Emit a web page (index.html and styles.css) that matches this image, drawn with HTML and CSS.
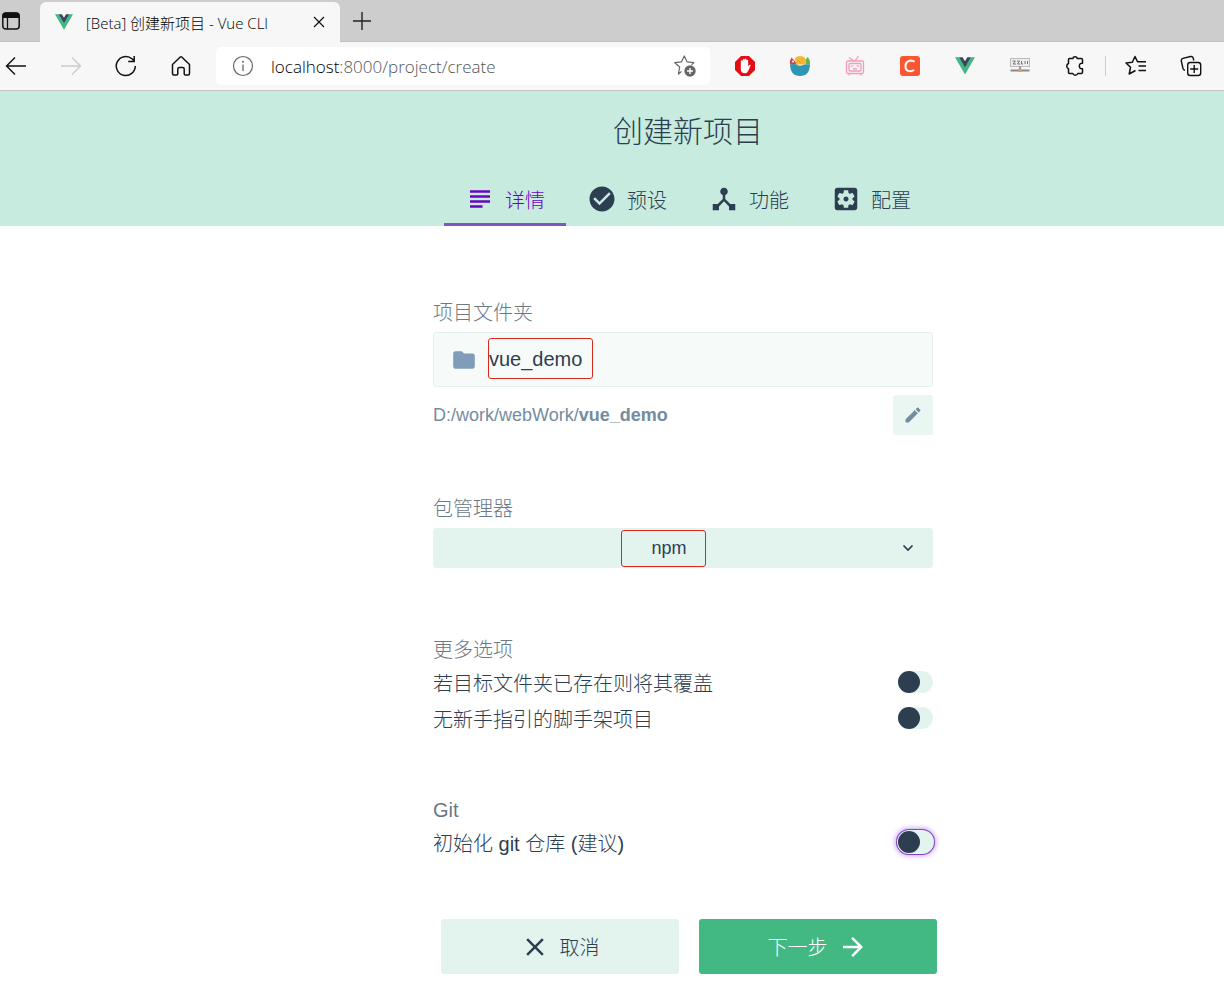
FILE: index.html
```html
<!DOCTYPE html>
<html lang="zh-CN">
<head>
<meta charset="utf-8">
<title>[Beta] 创建新项目 - Vue CLI</title>
<link rel="stylesheet" href="styles.css">
</head>
<body>
<div class="browser">
  <div class="tab-strip">
    <button class="icon-button tab-actions" aria-label="标签页操作">
      <svg width="20" height="20" viewBox="0 0 20 20"><rect x="1.8" y="2" width="16.4" height="16" rx="3" fill="none" stroke="#111" stroke-width="1.5"/><path d="M1.5 7V5a3.5 3.5 0 0 1 3.500-3.500h10A3.500 3.500 0 0 1 18.500 5v2z" fill="#111"/><path d="M6.500 7v11" stroke="#111" stroke-width="1.300"/></svg>
    </button>
    <div class="browser-tab">
      <svg width="18" height="16" viewBox="0 0 256 221"><path fill="#41b883" d="M0 0l128 220.800L256 0h-51.200L128 132.480 50.560 0z"/><path fill="#35495e" d="M50.560 0L128 133.120 204.800 0h-47.360L128 51.200 97.280 0z"/></svg>
      <span class="browser-tab-title">[Beta] 创建新项目 - Vue CLI</span>
      <button class="icon-button" aria-label="关闭标签页"><svg width="12" height="12" viewBox="0 0 12 12"><path d="M1 1l10 10M11 1L1 11" stroke="#111" stroke-width="1.200"/></svg></button>
    </div>
    <button class="icon-button new-tab" aria-label="新建标签页"><svg width="18" height="18" viewBox="0 0 18 18"><path d="M9 0v18M0 9h18" stroke="#222" stroke-width="1.400"/></svg></button>
  </div>
  <div class="toolbar">
    <div class="tool-group">
      <button class="icon-button" aria-label="后退"><svg width="22" height="22" viewBox="0 0 22 22" fill="none" stroke="#111" stroke-width="1.400"><path d="M21 11H1.500M10 2.500L1.500 11l8.500 8.500"/></svg></button>
      <button class="icon-button" aria-label="前进"><svg width="22" height="22" viewBox="0 0 22 22" fill="none" stroke="#ccc" stroke-width="1.400"><path d="M1 11h19.500M12 2.500l8.500 8.500-8.500 8.500"/></svg></button>
      <button class="icon-button" aria-label="刷新"><svg width="22" height="22" viewBox="0 0 22 22" fill="none" stroke="#111" stroke-width="1.500"><path d="M20.300 11A9.500 9.500 0 1 1 17 3.800l2 2M19.200 1v5.500h-6"/></svg></button>
      <button class="icon-button" aria-label="主页"><svg width="22" height="22" viewBox="0 0 22 22" fill="none" stroke="#111" stroke-width="1.500" stroke-linejoin="round"><path d="M2.500 9.500L10 2.200q1-.9 2 0l7.500 7.300v9q0 1.500-1.500 1.500h-2.500q-1.300 0-1.300-1.300V14q0-1.500-1.500-1.500h-3.400Q7.800 12.500 7.800 14v4.700Q7.800 20 6.500 20H4q-1.500 0-1.500-1.500z"/></svg></button>
    </div>
    <div class="address-bar">
      <svg width="22" height="22" viewBox="0 0 22 22"><circle cx="11" cy="11" r="9.500" fill="none" stroke="#666" stroke-width="1.200"/><path d="M11 9.500v6.500" stroke="#666" stroke-width="1.300"/><circle cx="11" cy="6.700" r="1" fill="#666"/></svg>
      <span class="url"><span class="host">localhost</span>:8000/project/create</span>
      <button class="icon-button" aria-label="添加到收藏夹"><svg width="22" height="22" viewBox="0 0 22 22"><path d="M7.500 16.500L4.400 19l1.300-7L.8 7.700l6.600-.8L10.300 1l2.900 5.900 6.600.8-2.300 2" fill="none" stroke="#666" stroke-width="1.200" stroke-linejoin="round"/><circle cx="16" cy="16" r="5.700" fill="#666"/><path d="M16 13v6M13 16h6" stroke="#fff" stroke-width="1.400"/></svg></button>
    </div>
    <div class="tool-group">
      <button class="icon-button" aria-label="广告拦截"><svg width="22" height="22" viewBox="0 0 22 22"><path d="M7 1h8l6 6v8l-6 6H7l-6-6V7z" fill="#e40d13"/><path d="M6.800 6.200q0-.9.900-.9t.9.900V5q0-1 1-1t1 1v-.5q0-.9.900-.9t.9.900v1q.1-.8.900-.8t.9.900v6l1-1.500q.7-.8 1.600-.2l-2.300 5.300Q13.200 18.300 11 18.300q-4.200 0-4.200-4.300z" fill="#fff"/></svg></button>
      <button class="icon-button" aria-label="扩展"><svg width="22" height="22" viewBox="0 0 22 22"><path d="M1 9.500Q.5 5 2.500 2.500L9 9.500z" fill="#c84852"/><path d="M14 9l4.500-7Q21.500 5 21 9.500z" fill="#64b447"/><path d="M7 9.500L6 3q3-3 8-1.500 4 2 3 8z" fill="#f6b832"/><path d="M1 9.500q4.500-1 7 .5 3 1.500 6 0 3-1.300 7-.5Q20.500 21 11 21T1 9.500z" fill="#2f95b5"/><circle cx="4" cy="6.500" r="1" fill="#fff"/><path d="M9 5l3 3M12 3.500l2 2" stroke="#e99b18"/></svg></button>
      <button class="icon-button" aria-label="哔哩哔哩助手"><svg width="22" height="22" viewBox="0 0 22 22" fill="none" stroke="#f39bb9" stroke-width="1.300"><rect x="2.500" y="6" width="17" height="12.500" rx="1.500"/><rect x="5" y="8.500" width="12" height="7.500" rx="1"/><path d="M5 2.500L10 6M14.500 1L11 6M6.500 11.500l3-1M15.500 11.500l-3-1M9 13.500q1 1 2 0 1 1 2 0M5 19v1.500M17 19v1.500"/></svg></button>
      <button class="icon-button" aria-label="C 扩展"><svg width="22" height="22" viewBox="0 0 22 22"><rect x="1" y="1" width="20" height="20" rx="3" fill="#fc5531"/><path d="M15.500 6.800Q14 5.500 11.800 5.500 6.500 6 6.500 11.500q0 4.700 4.600 4.700 2.300 0 4-1.200" fill="none" stroke="#fff" stroke-width="2"/></svg></button>
      <button class="icon-button" aria-label="Vue Devtools"><svg width="20" height="18" viewBox="0 0 256 221"><path fill="#41b883" d="M0 0l128 220.800L256 0h-51.200L128 132.480 50.560 0z"/><path fill="#35495e" d="M50.560 0L128 133.120 204.800 0h-47.360L128 51.200 97.280 0z"/></svg></button>
      <button class="icon-button" aria-label="IP 扩展"><svg width="22" height="22" viewBox="0 0 22 22"><rect x="1.500" y="3.500" width="19" height="8" fill="#eee" stroke="#bbb"/><path d="M3.500 6h3l-2.500 3h3M8 6h2.500l-2 3H11M12.500 6v3h1.500M16 6v3M18.500 6v3" stroke="#777" fill="none"/><path d="M11 11.500V15" stroke="#777" stroke-width="1.500"/><path d="M1.500 15.500h19" stroke="#888" stroke-width="2"/><rect x="9" y="13.500" width="4" height="3.500" rx="1" fill="#d59a83"/></svg></button>
      <button class="icon-button" aria-label="扩展管理"><svg width="22" height="22" viewBox="0 0 22 22" fill="none" stroke="#111" stroke-width="1.500" stroke-linejoin="round"><path d="M4.500 4.500q0-1 1-1h3.300a2.300 2.300 0 0 1 4.500 0h4q1.200 0 1.200 1.200v3.500q-3-.3-3.200 2.800.2 3 3.200 2.800v3.500q0 1.200-1.200 1.200h-3.500a2.700 2.700 0 0 1-5 0H5.500q-1 0-1-1v-3.800a2.800 2.800 0 0 1 0-5.200z"/></svg></button>
    </div>
    <div class="tool-divider"></div>
    <div class="tool-group">
      <button class="icon-button" aria-label="收藏夹"><svg width="22" height="22" viewBox="0 0 22 22" fill="none" stroke="#111" stroke-width="1.500" stroke-linejoin="round"><path d="M10.500 15.500L4.200 19l1.300-6.700L1 8l6.300-.8L10 1.500l2.500 5.200H21M13.500 11h7.500M13.500 15.500h7.500"/></svg></button>
      <button class="icon-button" aria-label="集锦"><svg width="22" height="22" viewBox="0 0 22 22" fill="none" stroke="#111" stroke-width="1.400"><path d="M5 15.300q-1.500-.3-2-1.800L1.300 6q-.3-2 1.500-2.600L10.500 1.500q2-.4 2.700 1.500l.6 2.500"/><rect x="7.700" y="7.500" width="13" height="13" rx="2.500"/><path d="M14.200 10v8M10.200 14h8"/></svg></button>
    </div>
  </div>
</div>

<header class="page-header">
  <h1>创建新项目</h1>
  <nav class="steps">
    <a class="step active" href="#details"><svg class="icon" viewBox="0 0 24 24"><path d="M14 17H4v2h10v-2zm6-8H4v2h16V9zM4 15h16v-2H4v2zM4 5v2h16V5H4z"/></svg>详情</a>
    <a class="step" href="#presets"><svg class="icon" viewBox="0 0 24 24"><path d="M12 2C6.480 2 2 6.480 2 12s4.480 10 10 10 10-4.480 10-10S17.520 2 12 2zm-2 15l-5-5 1.410-1.410L10 14.170l7.590-7.590L19 8l-9 9z"/></svg>预设</a>
    <a class="step" href="#features"><svg class="icon" viewBox="0 0 24 24"><path d="M17 16l-4-4V8.820C14.160 8.400 15 7.300 15 6c0-1.660-1.340-3-3-3S9 4.340 9 6c0 1.300.84 2.400 2 2.820V12l-4 4H3v5h5v-3.050l4-4.200 4 4.200V21h5v-5h-4z"/></svg>功能</a>
    <a class="step" href="#config"><svg class="icon" viewBox="0 0 24 24"><path d="M12 10c-1.100 0-2 .9-2 2s.9 2 2 2 2-.9 2-2-.9-2-2-2zm7-7H5c-1.110 0-2 .9-2 2v14c0 1.100.89 2 2 2h14c1.110 0 2-.9 2-2V5c0-1.100-.89-2-2-2zm-1.750 9c0 .23-.02.46-.05.68l1.480 1.160c.13.11.17.3.08.45l-1.400 2.420c-.09.15-.27.21-.43.15l-1.740-.7c-.36.28-.76.51-1.180.69l-.26 1.850c-.03.17-.18.3-.35.3h-2.800c-.17 0-.32-.13-.35-.29l-.26-1.850c-.43-.18-.82-.41-1.180-.69l-1.740.7c-.16.06-.34 0-.43-.15l-1.400-2.420c-.09-.15-.05-.34.08-.45l1.480-1.160c-.03-.23-.05-.46-.05-.69 0-.23.02-.46.05-.68l-1.480-1.160c-.13-.11-.17-.3-.08-.45l1.400-2.420c.09-.15.27-.21.43-.15l1.740.7c.36-.28.76-.51 1.180-.69l.26-1.850c.03-.17.18-.3.35-.3h2.800c.17 0 .32.13.35.29l.26 1.850c.43.18.82.41 1.180.69l1.740-.7c.16-.06.34 0 .43.15l1.400 2.420c.09.15.05.34-.08.45l-1.480 1.160c.03.23.05.46.05.69z"/></svg>配置</a>
  </nav>
</header>

<main>
  <form class="project-form">
    <div class="field">
      <label class="field-title" for="folder">项目文件夹</label>
      <div class="folder-box">
        <svg class="folder-icon" viewBox="0 0 24 24"><path d="M10 4H4c-1.100 0-1.990.9-1.990 2L2 18c0 1.100.9 2 2 2h16c1.100 0 2-.9 2-2V8c0-1.100-.9-2-2-2h-8l-2-2z"/></svg>
        <input id="folder" class="folder-input" type="text" value="vue_demo">
        <span class="mark mark-folder"></span>
      </div>
      <div class="path-row">
        <span>D:/work/webWork/<b class="path-name">vue_demo</b></span>
        <button type="button" class="edit-button" aria-label="编辑路径"><svg class="edit-icon" viewBox="0 0 24 24"><path d="M3 17.460v3.040c0 .28.22.5.5.5h3.040c.13 0 .26-.05.35-.15L17.810 9.940l-3.750-3.750L3.150 17.100c-.1.1-.15.22-.15.36zM20.710 7.040c.39-.39.39-1.020 0-1.410l-2.340-2.340c-.39-.39-1.020-.39-1.410 0l-1.830 1.830 3.750 3.750 1.830-1.830z"/></svg></button>
      </div>
    </div>
    <div class="field">
      <label class="field-title" for="manager">包管理器</label>
      <div class="select-box">
        <select id="manager" class="manager-select"><option>npm</option><option>yarn</option></select>
        <svg class="chevron" viewBox="0 0 12 8"><path d="M1.500 1.500L6 6l4.500-4.500" fill="none" stroke="#2c3e50" stroke-width="1.700"/></svg>
        <span class="mark mark-manager"></span>
      </div>
    </div>
    <div class="field options">
      <div class="field-title">更多选项</div>
      <label class="switch-row">若目标文件夹已存在则将其覆盖<input class="switch" type="checkbox"></label>
      <label class="switch-row">无新手指引的脚手架项目<input class="switch" type="checkbox"></label>
    </div>
    <div class="field">
      <div class="field-title">Git</div>
      <label class="switch-row">初始化 git 仓库 (建议)<input class="switch highlighted" type="checkbox"></label>
    </div>
  </form>
</main>

<footer class="actions">
  <button class="action"><svg class="icon" viewBox="0 0 24 24"><path d="M19 6.410L17.590 5 12 10.590 6.410 5 5 6.410 10.590 12 5 17.590 6.410 19 12 13.410 17.590 19 19 17.590 13.410 12z"/></svg>取消</button>
  <button class="action primary">下一步<svg class="icon" viewBox="0 0 24 24"><path d="M12 4l-1.410 1.410L16.170 11H4v2h12.170l-5.580 5.590L12 20l8-8z"/></svg></button>
</footer>
</body>
</html>
```
FILE: styles.css
```css
* {
  box-sizing: border-box;
}

body {
  margin: 0;
  background: #fff;
  color: #2c3e50;
  font-family: "Liberation Sans", "Noto Sans CJK SC", sans-serif;
  font-size: 20px;
  font-weight: 300;
}

button,
input,
select {
  font: inherit;
  color: inherit;
  border: 0;
  margin: 0;
  padding: 0;
  background: none;
}

svg {
  display: block;
  flex: none;
}

/* Browser frame */
.browser {
  font-family: "Open Sans", "Noto Sans CJK SC", sans-serif;
}

.tab-strip {
  display: flex;
  align-items: center;
  height: 42px;
  background: #cdcdcd;
  box-shadow: inset 0 -1px #c0c0c0;
}

.icon-button {
  display: flex;
  align-items: center;
  justify-content: center;
}

.tab-actions {
  width: 22px;
  margin-right: 18px;
}

.browser-tab {
  display: flex;
  align-items: center;
  align-self: flex-end;
  width: 300px;
  height: 40px;
  padding: 0 15px;
  border-radius: 6px 6px 0 0;
  background: #f7f7f7;
  color: #000;
  font-size: 15px;
}

.browser-tab-title {
  flex: 1;
  margin-left: 13px;
  white-space: nowrap;
}

.new-tab {
  margin-left: 13px;
}

.toolbar {
  display: flex;
  align-items: center;
  height: 49px;
  padding: 0 22px 0 5px;
  border-bottom: 1px solid #c0c4c2;
  background: #f7f7f7;
}

.tool-group {
  display: flex;
  align-items: center;
  gap: 33px;
}

.tool-group .icon-button {
  width: 22px;
  height: 22px;
}

.address-bar {
  display: flex;
  flex: 1;
  align-items: center;
  height: 38px;
  margin: 0 24px;
  padding: 0 14px 0 16px;
  border-radius: 5px;
  background: #fff;
  color: #555;
  font-size: 17px;
}

.url {
  flex: 1;
  margin-left: 17px;
}

.host {
  color: #000;
}

.tool-divider {
  width: 1px;
  height: 20px;
  margin: 0 19px;
  background: #ccc;
}

/* Page header */
.page-header {
  padding-left: 152px;
  background: #c8ebdf;
}

h1 {
  margin: 0;
  padding-top: 17px;
  font-size: 30px;
  font-weight: 300;
  line-height: 48px;
  text-align: center;
}

.steps {
  display: flex;
  justify-content: center;
  padding-top: 16px;
}

.step {
  display: flex;
  align-items: center;
  justify-content: center;
  gap: 10px;
  width: 122px;
  height: 54px;
  color: inherit;
  text-decoration: none;
}

.step.active {
  color: #6806c1;
  box-shadow: inset 0 -3px #7e57c2;
}

.icon {
  width: 30px;
  height: 30px;
  fill: currentColor;
}

/* Form */
main {
  padding-left: 142px;
}

.project-form {
  display: flex;
  flex-direction: column;
  gap: 60px;
  max-width: 500px;
  margin: 0 auto;
  padding-top: 73px;
}

.field-title {
  display: block;
  color: #6b7885;
  line-height: 28px;
}

.folder-box {
  position: relative;
  display: flex;
  align-items: center;
  height: 55px;
  margin-top: 5px;
  padding: 0 17px;
  border: 1px solid #e4f0ec;
  border-radius: 3px;
  background: #f6fbf9;
}

.folder-icon {
  width: 26px;
  height: 26px;
  margin-right: 12px;
  fill: #819cb9;
}

.folder-input {
  flex: 1;
  min-width: 0;
  outline: 0;
}

.mark {
  position: absolute;
  border: 1px solid #d9291c;
  border-radius: 3px;
  pointer-events: none;
}

.mark-folder {
  top: 5px;
  left: 54px;
  width: 105px;
  height: 41px;
}

.path-row {
  display: flex;
  align-items: center;
  justify-content: space-between;
  height: 40px;
  margin-top: 8px;
  color: #748c9f;
  font-size: 18px;
}

.path-name {
  font-weight: 700;
}

.edit-button {
  display: flex;
  align-items: center;
  justify-content: center;
  width: 40px;
  height: 40px;
  border-radius: 3px;
  background: #e9f6f2;
}

.edit-icon {
  width: 20px;
  height: 20px;
  fill: #748c9f;
}

.select-box {
  position: relative;
  margin-top: 5px;
}

.manager-select {
  display: block;
  width: 100%;
  height: 40px;
  padding-right: 28px;
  border-radius: 3px;
  background: #e3f4ee;
  font-size: 18px;
  text-align: center;
  text-align-last: center;
  appearance: none;
}

.chevron {
  position: absolute;
  top: 16px;
  right: 19px;
  width: 12px;
  height: 8px;
  pointer-events: none;
}

.mark-manager {
  top: 2px;
  left: 188px;
  width: 85px;
  height: 37px;
}

.options {
  padding-top: 8px;
}

.switch-row {
  display: flex;
  align-items: center;
  justify-content: space-between;
  height: 36px;
}

.switch {
  width: 35px;
  height: 22px;
  border-radius: 11px;
  background: #e3f4ee;
  appearance: none;
}

.switch::before {
  content: "";
  display: block;
  width: 22px;
  height: 22px;
  border-radius: 50%;
  background: #2c3e50;
}

.switch:checked::before {
  margin-left: auto;
}

.switch.highlighted {
  box-shadow: 0 0 0 1px #e9f6f2, 0 0 0 2px #7e3fc9, 0 0 5px 3px #c9a4f5;
}

/* Footer buttons */
.actions {
  display: flex;
  justify-content: center;
  gap: 20px;
  padding: 59px 0 7px 153px;
}

.action {
  display: flex;
  align-items: center;
  justify-content: center;
  gap: 10px;
  width: 238px;
  height: 55px;
  border-radius: 3px;
  background: #e3f4ee;
}

.action.primary {
  background: #42b983;
  color: #fff;
}
```
